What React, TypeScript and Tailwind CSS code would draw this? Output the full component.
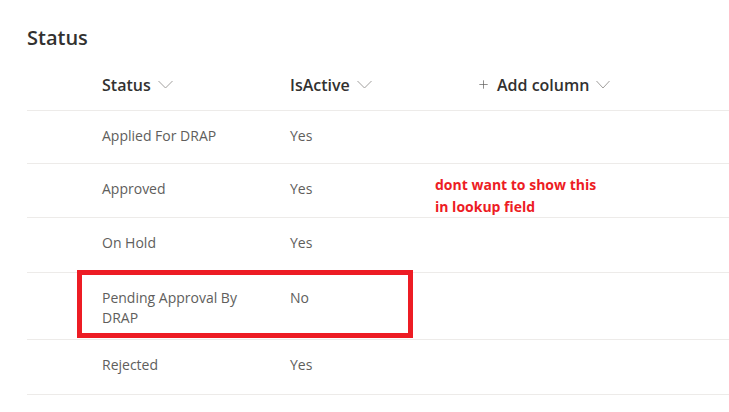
import { Plus } from "lucide-react";

const rows = [
  { status: "Applied For DRAP", active: "Yes", h: "h-[53px]" },
  { status: "Approved", active: "Yes", h: "h-[54px]" },
  { status: "On Hold", active: "Yes", h: "h-[55px]" },
  { status: "Pending Approval By DRAP", active: "No", h: "h-[67px]" },
  { status: "Rejected", active: "Yes", h: "h-[55px]" },
];

const Chevron = ({ w = 15 }: { w?: number }) => (
  <svg width={w} height="9" viewBox={`0 0 ${w} 9`} fill="none" className="text-[#a19f9d]">
    <path d={`M0.5 1 L${w / 2} 8 L${w - 0.5} 1`} stroke="currentColor" strokeWidth="1" />
  </svg>
);

const App = () => {
  return (
    <div className="relative w-[729px] h-[412px] overflow-hidden bg-white font-['Open_Sans',sans-serif] text-[#323130]">
      <h1 className="pl-[27px] pt-[24px] h-[57px] text-[20px] font-semibold leading-[28px]">Status</h1>

      <div className="ml-[27px]">
        <div className="flex h-[54px] items-center pt-[2px] border-b border-[#edebe9] text-[16px] font-semibold">
          <div className="w-[75px]" />
          <div className="flex w-[188px] items-center gap-[7px]">
            Status
            <Chevron />
          </div>
          <div className="flex w-[187px] items-center gap-[7px]">
            IsActive
            <Chevron />
          </div>
          <div className="flex items-center">
            <Plus size={13} strokeWidth={1.3} className="mr-[7px] text-[#605e5c]" />
            Add column
            <span className="ml-[7px]">
              <Chevron w={14} />
            </span>
          </div>
        </div>

        {rows.map((r) => (
          <div key={r.status} className={`flex ${r.h} border-b border-[#edebe9] pt-[15px] text-[14px] leading-[20px] text-[#605e5c]`}>
            <div className="w-[75px]" />
            <div className="w-[188px] pr-[30px]">{r.status}</div>
            <div className="w-[187px]">{r.active}</div>
          </div>
        ))}
      </div>

      {/* annotation overlay */}
      <div className="absolute left-[77px] top-[270px] h-[68px] w-[336px] border-[5px] border-[#ed1c24]" />
      <div className="absolute left-[435px] top-[174px] text-[14px] font-bold leading-[22px] text-[#ed1c24]">
        dont want to show this
        <br />
        in lookup field
      </div>
    </div>
  );
};

export default App;
